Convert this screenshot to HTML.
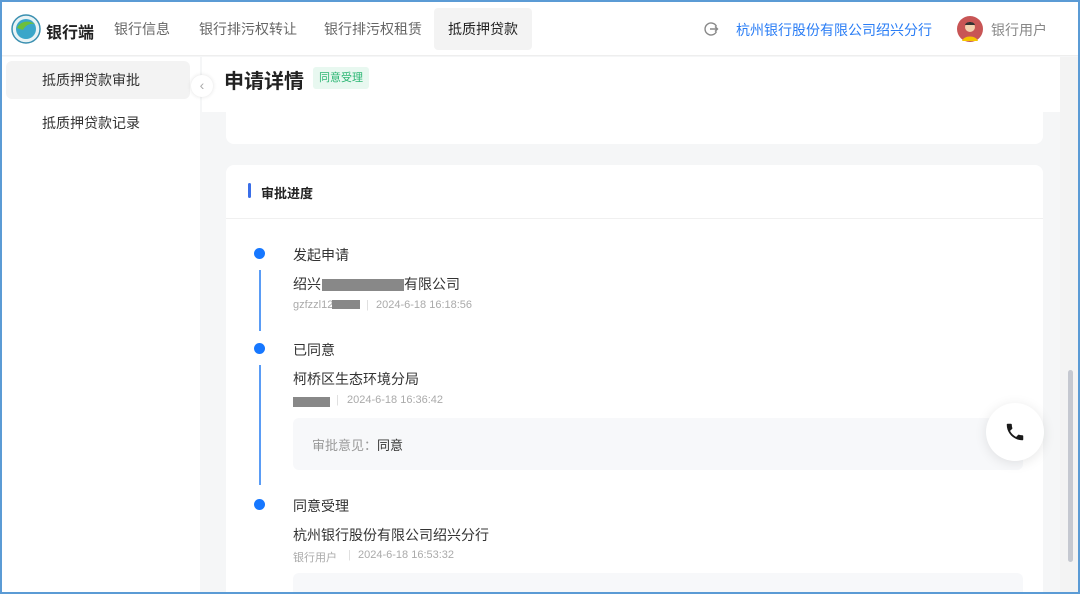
<!DOCTYPE html>
<html><head><meta charset="utf-8"><style>
*{margin:0;padding:0;box-sizing:border-box}
body{width:1080px;height:594px;overflow:hidden;font-family:"Liberation Sans","Noto Sans CJK SC",sans-serif;background:#5b9bd5;position:relative}
.frame{position:absolute;left:2px;top:2px;right:2px;bottom:2px;background:#f5f6f7;overflow:hidden}
.hdr{position:absolute;left:0;top:0;right:0;height:54px;background:#fff;border-bottom:1px solid #eee}
.nav{position:absolute;top:6px;height:42px;line-height:42px;font-size:14px;color:#666;padding:0 14px}
.side{position:absolute;left:0;top:55px;width:198px;bottom:0;background:#fff}
.si{position:absolute;left:4px;width:184px;height:38px;line-height:38px;padding-left:36px;font-size:14px;color:#333;border-radius:6px}
.abs{position:absolute}
.t{position:absolute;font-size:14px;color:#333;white-space:nowrap}
.m{position:absolute;font-size:11px;color:#aaa;white-space:nowrap}
.dot{position:absolute;width:11px;height:11px;border-radius:50%;background:#1677ff;box-shadow:0 0 0 3px #fff}
.grey{position:absolute;background:#888}
</style></head><body><div class="frame">
<div class="hdr">
 <svg class="abs" style="left:9px;top:12px" width="30" height="30" viewBox="0 0 30 30"><circle cx="15" cy="15" r="14" fill="#e8f3f5" stroke="#3a8fb0" stroke-width="1.5"/><circle cx="15" cy="15" r="10" fill="#3aa6c9"/><path d="M6 14c3-7 12-8 18-4-6-1-10 2-12 6z" fill="#6cbf3a"/></svg>
 <div class="t" style="left:44px;top:17px;font-size:16px;font-weight:bold;color:#222">银行端</div>
 <div class="nav" style="left:98px">银行信息</div>
 <div class="nav" style="left:183px">银行排污权转让</div>
 <div class="nav" style="left:308px">银行排污权租赁</div>
 <div class="nav" style="left:432px;background:#f3f3f3;color:#222;border-radius:4px;width:98px">抵质押贷款</div>
 <svg class="abs" style="left:701px;top:19px" width="16" height="16" viewBox="0 0 16 16"><path d="M13.5 5.5A6 6 0 1 0 13.5 10.5M7 8h7.5M12 5.5l2.5 2.5-2.5 2.5" fill="none" stroke="#888" stroke-width="1.4"/></svg>
 <div class="t" style="left:734px;top:18px;color:#2a7df5">杭州银行股份有限公司绍兴分行</div>
 <svg class="abs" style="left:955px;top:14px" width="26" height="26" viewBox="0 0 26 26"><circle cx="13" cy="13" r="13" fill="#c85555"/><path d="M5 25c2-6 14-6 16 0z" fill="#f5c400"/><circle cx="13" cy="11" r="5" fill="#f3d1b0"/><path d="M8 9c1-4 9-4 10 0z" fill="#333"/></svg>
 <div class="t" style="left:989px;top:18px;color:#888">银行用户</div>
</div>
<div class="side">
 <div class="si" style="top:4px;background:#f3f3f3">抵质押贷款审批</div>
 <div class="si" style="top:47px">抵质押贷款记录</div>
</div>
<div class="abs" style="left:200px;top:55px;width:858px;height:55px;background:#fff"></div>
<div class="abs" style="left:189px;top:73px;width:22px;height:22px;border-radius:50%;background:#fff;box-shadow:0 0 4px rgba(0,0,0,.12);font-size:14px;color:#aaa;text-align:center;line-height:20px;z-index:5">‹</div>
<div class="t" style="left:222px;top:63px;font-size:20px;font-weight:bold;color:#222">申请详情</div>
<div class="abs" style="left:311px;top:65px;height:22px;padding:0 6px;line-height:22px;background:#e8f8f0;color:#2bb673;font-size:11px;border-radius:3px">同意受理</div>
<div class="abs" style="left:224px;top:110px;width:817px;height:32px;background:#fff;border-radius:0 0 8px 8px"></div>
<div class="abs" style="left:224px;top:163px;width:817px;height:440px;background:#fff;border-radius:8px">
 <div class="abs" style="left:22px;top:18px;width:3px;height:15px;background:#3a6ee8;border-radius:2px"></div>
 <div class="t" style="left:35px;top:18px;font-weight:bold;font-size:13px;color:#222">审批进度</div>
 <div class="abs" style="left:0;top:53px;width:100%;height:1px;background:#f0f0f0"></div>
 <div class="abs" style="left:33px;top:105px;width:2px;height:61px;background:#5a9cf5"></div>
 <div class="abs" style="left:33px;top:200px;width:2px;height:120px;background:#5a9cf5"></div>
 <div class="dot" style="left:28px;top:83px"></div>
 <div class="dot" style="left:28px;top:178px"></div>
 <div class="dot" style="left:28px;top:334px"></div>
 <div class="t" style="left:67px;top:80px">发起申请</div>
 <div class="t" style="left:67px;top:109px">绍兴</div>
 <div class="grey" style="left:96px;top:114px;width:82px;height:12px"></div>
 <div class="t" style="left:178px;top:109px">有限公司</div>
 <div class="m" style="left:67px;top:134px">gzfzzl12</div>
 <div class="grey" style="left:106px;top:135px;width:28px;height:9px"></div>
 <div class="m" style="left:140px;top:134px;color:#ddd">|</div>
 <div class="m" style="left:150px;top:134px">2024-6-18 16:18:56</div>
 <div class="t" style="left:67px;top:175px">已同意</div>
 <div class="t" style="left:67px;top:204px">柯桥区生态环境分局</div>
 <div class="grey" style="left:67px;top:232px;width:37px;height:10px"></div>
 <div class="m" style="left:110px;top:229px;color:#ddd">|</div>
 <div class="m" style="left:121px;top:229px">2024-6-18 16:36:42</div>
 <div class="abs" style="left:67px;top:253px;width:730px;height:52px;background:#f7f8fa;border-radius:6px"></div>
 <div class="t" style="left:86px;top:270px;color:#999;font-size:13px">审批意见：<span style="color:#333">同意</span></div>
 <div class="t" style="left:67px;top:331px">同意受理</div>
 <div class="t" style="left:67px;top:360px">杭州银行股份有限公司绍兴分行</div>
 <div class="m" style="left:67px;top:384px">银行用户</div>
 <div class="m" style="left:122px;top:384px;color:#ddd">|</div>
 <div class="m" style="left:132px;top:384px">2024-6-18 16:53:32</div>
 <div class="abs" style="left:67px;top:408px;width:730px;height:40px;background:#f7f8fa;border-radius:6px"></div>
</div>
<div class="abs" style="left:1058px;top:55px;width:20px;bottom:0;background:#f3f3f3"></div>
<div class="abs" style="left:1066px;top:368px;width:5px;height:192px;background:#c5c8d0;border-radius:3px"></div>
<div class="abs" style="left:984px;top:401px;width:58px;height:58px;border-radius:50%;background:#fff;box-shadow:0 2px 12px rgba(0,0,0,.1)"></div>
<svg class="abs" style="left:1002px;top:419px" width="22" height="22" viewBox="0 0 24 24"><path d="M6.6 10.8c1.4 2.8 3.8 5.1 6.6 6.6l2.2-2.2c.3-.3.7-.4 1-.2 1.1.4 2.3.6 3.6.6.6 0 1 .4 1 1V20c0 .6-.4 1-1 1C10.6 21 3 13.4 3 4c0-.6.4-1 1-1h3.5c.6 0 1 .4 1 1 0 1.3.2 2.5.6 3.6.1.3 0 .7-.2 1z" fill="#1a1a1a"/></svg>
</div></body></html>
